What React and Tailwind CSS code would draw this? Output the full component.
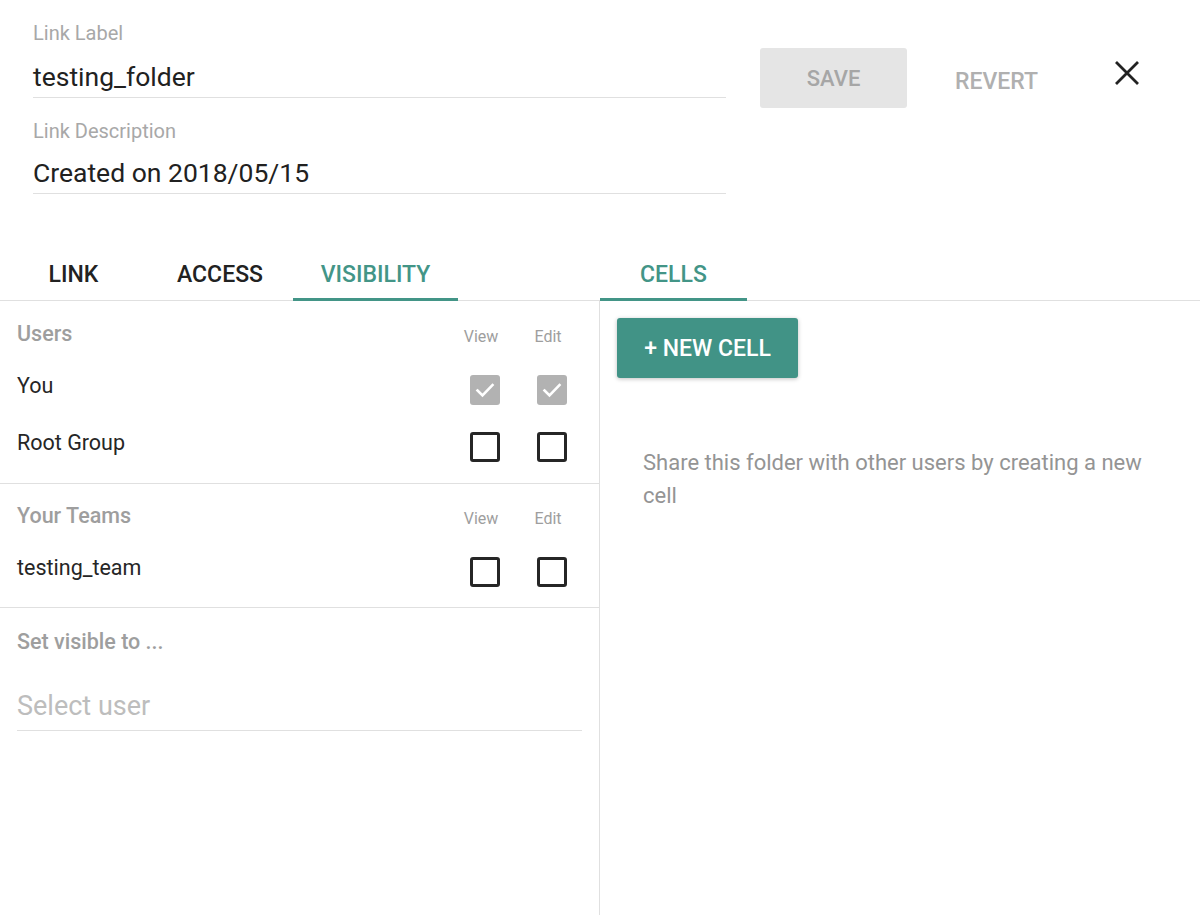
import React from "react";

function Check({ checked }) {
  if (checked) {
    return (
      <div className="w-[30px] h-[30px] rounded-[3px] bg-[#b2b2b2] flex items-center justify-center">
        <svg width="24" height="24" viewBox="0 0 24 24" fill="none">
          <path d="M4.5 12.5l5 5 10-10.5" stroke="#fff" strokeWidth="2.6" strokeLinecap="square" />
        </svg>
      </div>
    );
  }
  return <div className="w-[30px] h-[30px] rounded-[3px] border-[3px] border-[#262626] box-border" />;
}

function HeadRow({ title }) {
  return (
    <div className="h-[48px] flex items-center pl-[17px]">
      <div className="flex-1 text-[21.5px] font-medium text-[#9e9e9e]">{title}</div>
      <div className="mt-[6px] flex gap-[15px] pr-[25px] text-[16px] text-[#9e9e9e]">
        <div className="w-[52px] text-center">View</div>
        <div className="w-[52px] text-center">Edit</div>
      </div>
    </div>
  );
}

function Row({ name, checked }) {
  return (
    <div className="h-[57px] flex items-center pl-[17px]">
      <div className="flex-1 text-[21.5px] text-[#262626]">{name}</div>
      <div className="mt-[6px] flex gap-[37px] pr-[32px]">
        <Check checked={checked} />
        <Check checked={checked} />
      </div>
    </div>
  );
}

function Tab({ label, active, w }) {
  return (
    <div
      className={
        "h-[51px] -mb-px pt-[2px] flex items-center justify-center border-b-[3px] text-[23px] font-medium " +
        w +
        (active ? " border-[#439587] text-[#439587]" : " border-transparent text-[#222222]")
      }
    >
      {label}
    </div>
  );
}

export default function App() {
  return (
    <div
      className="w-[1200px] h-[915px] bg-white flex flex-col overflow-hidden"
      style={{ fontFamily: "Roboto, 'Noto Sans', sans-serif" }}
    >
      {/* header */}
      <div className="h-[250px] flex items-start">
        <div className="ml-[33px] w-[693px] pt-[22px]">
          <div className="h-[22px] leading-[22px] text-[20px] text-[#a8a8a8]">Link Label</div>
          <div className="mt-[17px] h-[37px] leading-[32px] text-[26.5px] text-[#212121] border-b border-[#e0e0e0]">
            testing_folder
          </div>
          <div className="mt-[22px] h-[22px] leading-[22px] text-[20px] text-[#a8a8a8]">Link Description</div>
          <div className="mt-[15px] h-[37px] leading-[32px] text-[26.5px] text-[#212121] border-b border-[#e0e0e0]">
            Created on 2018/05/15
          </div>
        </div>
        <div className="ml-[34px] mt-[48px] flex items-start">
          <div className="w-[147px] h-[60px] rounded-[3px] bg-[#e5e5e5] flex items-center justify-center text-[22px] font-medium text-[#a6a6a6]">
            SAVE
          </div>
          <div className="ml-[48px] mt-[4px] h-[60px] flex items-center text-[23px] font-medium text-[#b0b0b0]">
            REVERT
          </div>
          <div className="ml-[76px] mt-[12px]">
            <svg width="26" height="26" viewBox="0 0 26 26" fill="none">
              <path d="M2 2L24 24M24 2L2 24" stroke="#222" strokeWidth="2.8" />
            </svg>
          </div>
        </div>
      </div>

      {/* tabs */}
      <div className="h-[51px] flex border-b border-[#e0e0e0]">
        <div className="w-[600px] flex">
          <Tab label="LINK" w="w-[147px]" />
          <Tab label="ACCESS" w="w-[146px]" />
          <Tab label="VISIBILITY" w="w-[165px]" active />
        </div>
        <Tab label="CELLS" w="w-[147px]" active />
      </div>

      {/* content */}
      <div className="flex-1 flex">
        <div className="w-[600px] border-r border-[#e0e0e0] flex flex-col">
          <div className="pt-[9px] pb-[11px] border-b border-[#e0e0e0]">
            <HeadRow title="Users" />
            <Row name="You" checked />
            <Row name="Root Group" />
          </div>
          <div className="pt-[8px] pb-[10px] border-b border-[#e0e0e0]">
            <HeadRow title="Your Teams" />
            <Row name="testing_team" />
          </div>
          <div className="pt-[10px]">
            <div className="h-[48px] flex items-center pl-[17px] text-[21.5px] font-medium text-[#9e9e9e]">
              Set visible to ...
            </div>
            <div className="mx-[17px] mt-[20px] h-[45px] pb-[4px] flex items-center text-[27px] text-[#bdbdbd] border-b border-[#e0e0e0]">
              Select user
            </div>
          </div>
        </div>
        <div className="flex-1 p-[17px]">
          <div className="w-[181px] h-[60px] rounded-[3px] bg-[#419386] shadow-[0_1px_4px_rgba(0,0,0,0.25)] flex items-center justify-center text-[23px] font-medium text-white pt-[2px]">
            + NEW CELL
          </div>
          <div className="mt-[68px] ml-[26px] w-[512px] text-[22px] leading-[33px] text-[#949494]">
            Share this folder with other users by creating a new cell
          </div>
        </div>
      </div>
    </div>
  );
}
